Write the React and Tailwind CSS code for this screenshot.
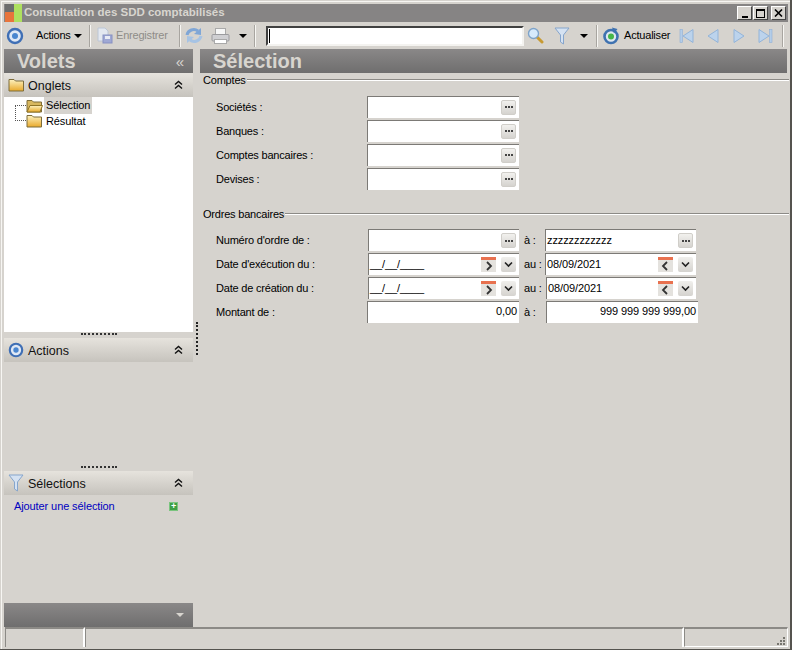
import React from "react";

function CircleIcon({ size = 18 }) {
  return (
    <svg width={size} height={size} viewBox="0 0 18 18">
      <circle cx="9" cy="9" r="7" fill="#dfe8f5" stroke="#3f6fb5" strokeWidth="2.4" />
      <circle cx="9" cy="9" r="3" fill="#4a86cf" />
    </svg>
  );
}

function FolderIcon({ open }) {
  return (
    <svg width="17" height="14" viewBox="0 0 17 14">
      <defs>
        <linearGradient id="fold" x1="0" y1="0" x2="0" y2="1">
          <stop offset="0" stopColor="#fdf2c0" />
          <stop offset="1" stopColor="#e9a92a" />
        </linearGradient>
      </defs>
      <path d="M1 1.5 L6 1.5 L7.5 3 L15.5 3 L15.5 13 L1 13 Z" fill={open ? "#d8b75e" : "url(#fold)"} stroke="#7d6c3a" />
      {open && <path d="M1 13 L4 6.5 L16.5 6.5 L14 13 Z" fill="url(#fold)" stroke="#8f7427" />}
    </svg>
  );
}

function FilterIcon() {
  return (
    <svg width="16" height="18" viewBox="0 0 16 18">
      <path d="M1 1 L15 1 L9.5 8 L9.5 17 L6.5 15 L6.5 8 Z" fill="#d5e2f2" stroke="#86a5cc" />
    </svg>
  );
}

function ChevronsUp() {
  return (
    <svg width="9" height="10" viewBox="0 0 9 10" fill="none" stroke="#111" strokeWidth="1.4">
      <path d="M1 4.5 L4.5 1.5 L8 4.5" />
      <path d="M1 8.5 L4.5 5.5 L8 8.5" />
    </svg>
  );
}

function Caret() {
  return <div className="w-0 h-0 border-l-4 border-r-4 border-t-4 border-l-transparent border-r-transparent border-t-black" />;
}

function Sep({ className = "" }) {
  return <div className={"w-[2px] h-[22px] bg-[#f7f6f3] border-l border-[#a8a5a0] " + className} />;
}

function NavIcon({ flip, bar }) {
  return (
    <svg width="16" height="16" viewBox="0 0 16 16" className={flip ? "-scale-x-100" : ""}>
      {bar && <rect x="1" y="1.5" width="2.5" height="13" fill="#b4cde8" stroke="#8fb0d6" strokeWidth="0.6" />}
      <path d="M14 1.5 L14 14.5 L4 8 Z" fill="#bcd3ec" stroke="#93b4d9" />
    </svg>
  );
}

function Toolbar() {
  return (
    <div className="h-[27px] flex items-center text-[11px] tracking-[-0.2px] text-black">
      <div className="ml-[2px] w-[20px]"><CircleIcon /></div>
      <span className="ml-[10px] w-[37px]">Actions</span>
      <div className="ml-[1px]"><Caret /></div>
      <Sep className="ml-[7px]" />
      <svg className="ml-[6px]" width="16" height="17" viewBox="0 0 16 17">
        <path d="M1 1 H8 L11 4 V14 H1 Z" fill="#e3e8f0" stroke="#bcc6d6" />
        <rect x="6" y="8" width="9" height="8" fill="#9fa8d4" stroke="#8791c2" />
        <rect x="8" y="9" width="5" height="3" fill="#e8ebf5" />
      </svg>
      <span className="ml-[3px] w-[55px] text-[#8e8c88]">Enregistrer</span>
      <Sep className="ml-[8px]" />
      <svg className="ml-[4px]" width="18" height="19" viewBox="0 0 18 19" fill="none">
        <path d="M2 9 C3 4 9 2 13 5" stroke="#7fa6d6" strokeWidth="3" />
        <path d="M16 2 L16 9 L9 8 Z" fill="#7fa6d6" />
        <path d="M16 10 C15 15 9 17 5 14" stroke="#a6c3e4" strokeWidth="3" />
        <path d="M2 17 L2 10 L9 11 Z" fill="#a6c3e4" />
      </svg>
      <svg className="ml-[8px]" width="19" height="18" viewBox="0 0 19 18">
        <rect x="4.5" y="1.5" width="10" height="7" fill="#f6f6f6" stroke="#a9a9a9" />
        <rect x="1" y="7.5" width="17" height="6.5" rx="1" fill="#cfcfd2" stroke="#9b9b9e" />
        <rect x="3.5" y="12.5" width="12" height="4" fill="#fff" stroke="#a9a9a9" />
      </svg>
      <div className="ml-[9px]"><Caret /></div>
      <Sep className="ml-[7px]" />
      <div className="ml-[10px] w-[258px] h-[20px] bg-white border-2 border-t-[#404040] border-l-[#404040] border-r-[#f4f3f0] border-b-[#f4f3f0] flex items-center">
        <div className="w-px h-[14px] bg-black ml-[1px]" />
      </div>
      <svg className="ml-[3px]" width="17" height="17" viewBox="0 0 17 17">
        <path d="M10 10 L15 15" stroke="#c79a32" strokeWidth="3" strokeLinecap="round" />
        <circle cx="6.5" cy="6.5" r="5" fill="#d6eafc" stroke="#7ea3c9" strokeWidth="1.4" />
      </svg>
      <div className="ml-[10px] h-[18px]"><FilterIcon /></div>
      <div className="ml-[10px]"><Caret /></div>
      <Sep className="ml-[8px]" />
      <svg className="ml-[4px]" width="18" height="18" viewBox="0 0 18 18">
        <circle cx="9" cy="9.5" r="6.5" fill="#dfe8f0" stroke="#3f72b0" strokeWidth="2.6" />
        <circle cx="9" cy="9.5" r="3" fill="#46b648" />
        <path d="M10 0.5 L15.5 2 L12 6.5 Z" fill="#3f72b0" />
      </svg>
      <span className="ml-[4px] w-[48px]">Actualiser</span>
      <div className="ml-[7px]"><NavIcon bar /></div>
      <div className="ml-[9px]"><NavIcon /></div>
      <div className="ml-[12px]"><NavIcon flip /></div>
      <div className="ml-[9px]"><NavIcon flip bar /></div>
      <Sep className="ml-[9px]" />
    </div>
  );
}

function PanelHead({ icon, title }) {
  return (
    <div className="h-[24px] flex items-center bg-gradient-to-b from-[#e6e3dd] to-[#c6c3bd] text-[12.5px] text-[#111]">
      <div className="w-[22px] flex justify-center shrink-0 ml-[1px]">{icon}</div>
      <span className="ml-[1px] flex-1 pt-[2px]">{title}</span>
      <div className="mr-[10px]"><ChevronsUp /></div>
    </div>
  );
}

function Grip() {
  return (
    <div className="h-[6px] flex justify-center items-start">
      <div className="w-[36px] h-[2px] border-t-2 border-dotted border-[#333] mt-[1px]" />
    </div>
  );
}

function Sidebar() {
  return (
    <div className="w-[189px] shrink-0 flex flex-col">
      <div className="h-[24px] flex items-center justify-between bg-gradient-to-b from-[#8a8888] to-[#6f6e6e] pl-[13px] pr-[9px]">
        <span className="text-[20px] font-bold text-[#d8d5cf] leading-none">Volets</span>
        <span className="text-[15px] text-[#d8d5cf] leading-none">«</span>
      </div>
      <PanelHead icon={<FolderIcon />} title="Onglets" />
      <div className="h-[235px] bg-white relative text-[11px] tracking-[-0.1px] text-black">
        <div className="absolute left-[11px] top-[8px] w-[11px] h-[16px] border-l border-b border-dotted border-[#555]" />
        <div className="absolute left-[11px] top-[8px] w-[11px] border-t border-dotted border-[#555]" />
        <div className="pl-[22px] pt-[1px] flex items-center h-[16px]">
          <FolderIcon open />
          <span className="ml-[1px] pl-[2px] pr-[2px] bg-[#d6d3ce]">Sélection</span>
        </div>
        <div className="pl-[22px] flex items-center h-[16px]">
          <FolderIcon />
          <span className="ml-[1px] pl-[2px]">Résultat</span>
        </div>
      </div>
      <Grip />
      <PanelHead icon={<CircleIcon size={16} />} title="Actions" />
      <div className="h-[103px]" />
      <Grip />
      <PanelHead icon={<FilterIcon />} title="Sélections" />
      <div className="flex items-center justify-between pl-[10px] pr-[15px] pt-[3px] text-[11px] tracking-[-0.1px] text-[#0000c0]">
        <span>Ajouter une sélection</span>
        <div className="w-[9px] h-[9px] bg-[#3f9f45] border border-[#7bc47f] flex items-center justify-center text-white text-[9px] font-bold leading-none">+</div>
      </div>
      <div className="mt-auto h-[24px] flex items-center justify-end pr-[9px] bg-gradient-to-b from-[#8a8888] to-[#6f6e6e]">
        <div className="w-0 h-0 border-l-4 border-r-4 border-t-4 border-l-transparent border-r-transparent border-t-[#d8d5cf]" />
      </div>
    </div>
  );
}

function EllipsisBtn() {
  return (
    <div className="w-[15px] h-[15px] rounded-[2px] bg-gradient-to-b from-[#f2f1ee] to-[#d5d3cf] border border-[#d0cec9] flex items-center justify-center gap-px">
      <span className="w-[2px] h-[2px] bg-[#444]" />
      <span className="w-[2px] h-[2px] bg-[#444]" />
      <span className="w-[2px] h-[2px] bg-[#444]" />
    </div>
  );
}

function CalBtn({ back }) {
  return (
    <div className="w-[15px] h-[15px] bg-[#e4e2de]">
      <div className="h-[3px] bg-[#e8714f]" />
      <svg width="15" height="12" viewBox="0 0 15 12" fill="none" stroke="#333" strokeWidth="1.8">
        <path d={back ? "M9 2 L5 6 L9 10" : "M6 2 L10 6 L6 10"} />
      </svg>
    </div>
  );
}

function DownBtn() {
  return (
    <div className="w-[15px] h-[15px] rounded-[2px] bg-gradient-to-b from-[#f0efec] to-[#d5d3cf] flex items-center justify-center ml-[5px]">
      <svg width="9" height="7" viewBox="0 0 9 7" fill="none" stroke="#222" strokeWidth="1.6">
        <path d="M1 1.5 L4.5 5 L8 1.5" />
      </svg>
    </div>
  );
}

function Field({ w, text, right, btn, className = "" }) {
  return (
    <div style={{ width: w }} className={"h-[22px] bg-white border-t border-l border-[#7c7a76] flex items-center text-[11px] tracking-[-0.1px] text-black " + (right ? "justify-end pr-[2px] " : "justify-between pr-[3px] ") + className}>
      {text && <span className={right ? "-mt-[2px]" : "pl-[1px] -mt-px"}>{text}</span>}
      {!text && !right && <span />}
      {btn}
    </div>
  );
}

function GroupTitle({ title }) {
  return (
    <div className="flex items-center text-[11px] tracking-[-0.2px] text-black pl-[3px]">
      <span>{title}</span>
      <div className="flex-1 border-t border-b border-t-[#8c8a86] border-b-white h-[2px] ml-px" />
    </div>
  );
}

function Row({ label, children }) {
  return (
    <div className="h-[24px] flex items-center text-[11px] tracking-[-0.2px] text-black">
      <span className="pl-[16px] pt-[1px] w-[167px] shrink-0">{label}</span>
      {children}
    </div>
  );
}

function DateBtns({ back }) {
  return (
    <div className="flex items-center">
      <CalBtn back={back} />
      <DownBtn />
    </div>
  );
}

function Main() {
  return (
    <div className="flex-1 flex flex-col">
      <div className="h-[24px] mr-[2px] flex items-center bg-gradient-to-b from-[#8a8888] to-[#6f6e6e] pl-[13px]">
        <span className="text-[20px] font-bold text-[#d8d5cf] leading-none">Sélection</span>
      </div>
      <div className="-mt-px">
        <GroupTitle title="Comptes" />
        <div className="mt-[6px]">
          {["Sociétés :", "Banques :", "Comptes bancaires :", "Devises :"].map((l) => (
            <Row key={l} label={l}>
              <Field w={152} btn={<EllipsisBtn />} />
            </Row>
          ))}
        </div>
      </div>
      <div className="mt-[15px]">
        <GroupTitle title="Ordres bancaires" />
        <div className="mt-[6px]">
          <Row label="Numéro d'ordre de :">
            <Field w={151} btn={<EllipsisBtn />} className="ml-[1px]" />
            <span className="ml-[5px] w-[21px]">à :</span>
            <Field w={151} text="zzzzzzzzzzzz" btn={<EllipsisBtn />} />
          </Row>
          <Row label="Date d'exécution du :">
            <Field w={151} text="__/__/____" btn={<DateBtns />} className="ml-[1px]" />
            <span className="ml-[5px] w-[21px]">au :</span>
            <Field w={151} text="08/09/2021" btn={<DateBtns back />} />
          </Row>
          <Row label="Date de création du :">
            <Field w={151} text="__/__/____" btn={<DateBtns />} className="ml-[1px]" />
            <span className="ml-[5px] w-[22px]">au :</span>
            <Field w={150} text="08/09/2021" btn={<DateBtns back />} />
          </Row>
          <Row label="Montant de :">
            <Field w={152} text="0,00" right />
            <span className="ml-[5px] w-[22px]">à :</span>
            <Field w={152} text="999 999 999 999,00" right />
          </Row>
        </div>
      </div>
    </div>
  );
}

function StatusCell({ className }) {
  return <div className={"h-full border-t-2 border-l border-t-[#8c8a86] border-l-[#8c8a86] border-r-2 border-r-white " + className} />;
}

export default function App() {
  return (
    <div className="w-[792px] h-[650px] bg-[#d6d3ce] border-r-2 border-b border-r-[#55534f] border-b-[#55534f] font-['Liberation_Sans',sans-serif] overflow-hidden">
      <div className="h-full pl-[1px] pt-[1px] flex flex-col">
        <div className="h-full border-l border-t border-[#f7f6f3] pl-[2px] pr-[1px] pt-[2px] flex flex-col">
          <div className="h-[18px] mr-px bg-[#868484] flex items-center shrink-0">
            <svg className="ml-[1px]" width="18" height="18" viewBox="0 0 18 18">
              <rect x="0" y="8" width="9" height="10" fill="#e8743b" />
              <rect x="0" y="0" width="9" height="8" fill="#6d6d6d" />
              <rect x="9" y="0" width="8" height="18" fill="#aee05f" />
            </svg>
            <span className="text-[11.5px] font-bold text-[#d8d5cf] ml-[1px] flex-1">Consultation des SDD comptabilisés</span>
            <div className="flex mr-[2px] gap-px">
              <div className="w-[15px] h-[14px] bg-[#d6d3ce] border border-t-white border-l-white border-r-[#444] border-b-[#444] flex items-end justify-center pb-[1px]">
                <div className="w-[6px] h-[2px] bg-black" />
              </div>
              <div className="w-[15px] h-[14px] bg-[#d6d3ce] border border-t-white border-l-white border-r-[#444] border-b-[#444] flex items-center justify-center">
                <div className="w-[9px] h-[9px] border border-t-2 border-black" />
              </div>
              <div className="w-[15px] h-[14px] ml-[2px] bg-[#d6d3ce] border border-t-white border-l-white border-r-[#444] border-b-[#444] flex items-center justify-center">
                <svg width="9" height="8" viewBox="0 0 9 8" stroke="#000" strokeWidth="1.6"><path d="M1 0.5 L8 7.5 M8 0.5 L1 7.5" /></svg>
              </div>
            </div>
          </div>
          <Toolbar />
          <div className="flex-1 flex min-h-0">
            <Sidebar />
            <div className="w-[7px] shrink-0 flex items-center justify-center">
              <div className="h-[33px] border-l-2 border-dotted border-[#222]" />
            </div>
            <Main />
          </div>
          <div className="h-[20px] mb-[2px] flex shrink-0 pl-[1px] mr-px">
            <StatusCell className="w-[80px]" />
            <StatusCell className="w-[599px]" />
            <div className="flex-1 h-full border-t-2 border-l border-r border-b border-t-[#8c8a86] border-l-[#8c8a86] border-r-white border-b-white relative">
              <div className="absolute right-[2px] bottom-[1px] grid grid-cols-3 gap-px">
                <span /><span /><span className="w-[2px] h-[2px] bg-[#77756f]" />
                <span /><span className="w-[2px] h-[2px] bg-[#77756f]" /><span className="w-[2px] h-[2px] bg-[#77756f]" />
                <span className="w-[2px] h-[2px] bg-[#77756f]" /><span className="w-[2px] h-[2px] bg-[#77756f]" /><span className="w-[2px] h-[2px] bg-[#77756f]" />
              </div>
            </div>
          </div>
        </div>
      </div>
    </div>
  );
}
